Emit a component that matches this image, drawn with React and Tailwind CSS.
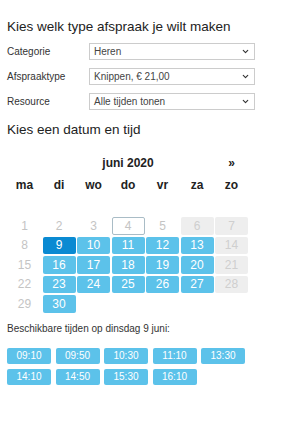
import { ChevronDown } from 'lucide-react';

const font = { fontFamily: '"Liberation Sans", Arial, sans-serif' };

const fields = [
    { label: 'Categorie', value: 'Heren' },
    { label: 'Afspraaktype', value: 'Knippen, € 21,00' },
    { label: 'Resource', value: 'Alle tijden tonen' },
];

const dayNames = ['ma', 'di', 'wo', 'do', 'vr', 'za', 'zo'];

const times = ['09:10', '09:50', '10:30', '11:10', '13:30', '14:10', '14:50', '15:30', '16:10'];

// juni 2020 begint op maandag
function dayStyle(d) {
    const col = (d - 1) % 7;
    if (d === 9) return 'bg-[#0a8ad2] text-white';
    if (d === 4) return 'border border-[#a9bcc6] text-[#c4c4c4] bg-white';
    if (col === 6 || d === 6) return 'bg-[#eeeeee] text-[#cfcfcf]';
    if (d < 8 || col === 0) return 'text-[#c4c4c4]';
    return 'bg-[#5cc2ea] text-white';
}

export default function App() {
    const days = Array.from({ length: 30 }, (_, i) => i + 1);

    return (
        <div className="w-[300px] h-[435px] bg-white text-[#333]" style={font}>
            <div className="pt-[18px] px-[7px]">
                <h1 className="text-[13.5px] leading-[18px] text-[#222]">Kies welk type afspraak je wilt maken</h1>

                <div className="mt-[7px] flex flex-col gap-[8px]">
                    {fields.map(f => (
                        <div key={f.label} className="flex items-center">
                            <span className="w-[82px] text-[10px] text-[#333]">{f.label}</span>
                            <div className="w-[166px] h-[17px] border border-[#cccccc] flex items-center justify-between pl-[4px] pr-[4px]">
                                <span className="text-[10px] text-[#444]">{f.value}</span>
                                <ChevronDown size={9} strokeWidth={3} className="text-[#333]" />
                            </div>
                        </div>
                    ))}
                </div>

                <h2 className="mt-[11px] text-[13.5px] leading-[18px] text-[#222]">Kies een datum en tijd</h2>
            </div>

            <div className="ml-[8px] mt-[13px] w-[240px]">
                <div className="grid grid-cols-[repeat(7,33px)] gap-x-[1.5px] h-[22px] items-center text-[12px] font-bold text-[#222]">
                    <span></span>
                    <span className="col-span-5 text-center">juni 2020</span>
                    <span className="text-center">»</span>
                </div>
                <div className="grid grid-cols-[repeat(7,33px)] gap-x-[1.5px] mt-[1px] h-[20px] items-center text-[12px] font-bold text-[#222]">
                    {dayNames.map(n => (
                        <span key={n} className="text-center">{n}</span>
                    ))}
                </div>
                <div className="grid grid-cols-[repeat(7,33px)] gap-x-[1.5px] gap-y-[2px] mt-[22px]">
                    {days.map(d => (
                        <div
                            key={d}
                            className={`h-[17.5px] rounded-[2px] flex items-center justify-center text-[12px] ${dayStyle(d)}`}
                        >
                            {d}
                        </div>
                    ))}
                </div>
            </div>

            <div className="px-[7px] mt-[8px]">
                <p className="text-[10px] text-[#333]">Beschikbare tijden op dinsdag 9 juni:</p>
                <div className="mt-[12px] flex flex-wrap gap-x-[4.5px] gap-y-[5px] w-[240px]">
                    {times.map(t => (
                        <button
                            key={t}
                            className="w-[44px] h-[16px] rounded-[2px] bg-[#5cc2ea] text-white text-[10px] flex items-center justify-center"
                        >
                            {t}
                        </button>
                    ))}
                </div>
            </div>
        </div>
    );
}
